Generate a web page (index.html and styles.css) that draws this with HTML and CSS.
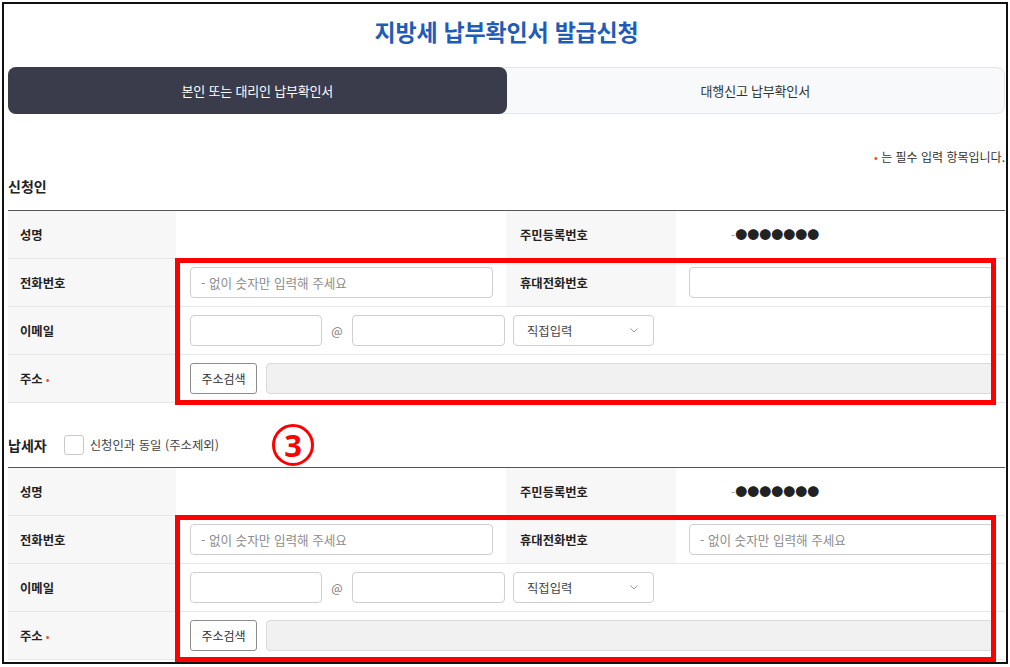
FILE: index.html
```html
<!DOCTYPE html>
<html lang="ko">
<head>
<meta charset="utf-8">
<title>지방세 납부확인서 발급신청</title>
<link rel="stylesheet" href="styles.css">
</head>
<body>
<div class="frame">
  <div class="page">
    <h1 class="title">지방세 납부확인서 발급신청</h1>
    <div class="tabs">
      <div class="tab active">본인 또는 대리인 납부확인서</div>
      <div class="tab">대행신고 납부확인서</div>
    </div>
    <p class="req-note"><span class="dot">•</span> 는 필수 입력 항목입니다.</p>

    <h2 class="sec-title">신청인</h2>
    <div class="table">
      <div class="row">
        <div class="th">성명</div>
        <div class="td"></div>
        <div class="th th2">주민등록번호</div>
        <div class="td rrn"><span class="dash">-</span>●●●●●●●</div>
      </div>
      <div class="row">
        <div class="th">전화번호</div>
        <div class="td"><input class="inp phone" placeholder="- 없이 숫자만 입력해 주세요"></div>
        <div class="th th2">휴대전화번호</div>
        <div class="td td-last"><input class="inp full"></div>
      </div>
      <div class="row">
        <div class="th">이메일</div>
        <div class="td span3 email">
          <input class="inp mail1">
          <span class="at">@</span>
          <input class="inp mail2">
          <div class="select"><span>직접입력</span><svg class="chev" width="8" height="5" viewBox="0 0 8 5"><path d="M0.5 0.5 L4 4 L7.5 0.5" fill="none" stroke="#9a9a9a" stroke-width="1"/></svg></div>
        </div>
      </div>
      <div class="row">
        <div class="th">주소 <span class="dot">•</span></div>
        <div class="td span3 addr-cell">
          <button class="btn" type="button">주소검색</button>
          <input class="inp addr" disabled>
        </div>
      </div>
      <div class="mark"></div>
    </div>

    <div class="sec-head">
      <h2 class="sec-title inline">납세자</h2>
      <span class="chk"></span>
      <span class="chk-label">신청인과 동일 (주소제외)</span>
      <span class="num-mark">3</span>
    </div>
    <div class="table table2">
      <div class="row">
        <div class="th">성명</div>
        <div class="td"></div>
        <div class="th th2">주민등록번호</div>
        <div class="td rrn"><span class="dash">-</span>●●●●●●●</div>
      </div>
      <div class="row">
        <div class="th">전화번호</div>
        <div class="td"><input class="inp phone" placeholder="- 없이 숫자만 입력해 주세요"></div>
        <div class="th th2">휴대전화번호</div>
        <div class="td td-last"><input class="inp full" placeholder="- 없이 숫자만 입력해 주세요"></div>
      </div>
      <div class="row">
        <div class="th">이메일</div>
        <div class="td span3 email">
          <input class="inp mail1">
          <span class="at">@</span>
          <input class="inp mail2">
          <div class="select"><span>직접입력</span><svg class="chev" width="8" height="5" viewBox="0 0 8 5"><path d="M0.5 0.5 L4 4 L7.5 0.5" fill="none" stroke="#9a9a9a" stroke-width="1"/></svg></div>
        </div>
      </div>
      <div class="row">
        <div class="th">주소 <span class="dot">•</span></div>
        <div class="td span3 addr-cell">
          <button class="btn" type="button">주소검색</button>
          <input class="inp addr" disabled>
        </div>
      </div>
      <div class="mark"></div>
    </div>
  </div>
</div>
</body>
</html>
```
FILE: styles.css
```css
html, body {
  margin: 0;
  padding: 0;
  background: #fff;
}
body {
  font-family: "Noto Sans CJK KR", "Noto Sans", sans-serif;
  color: #222;
}
.frame {
  margin: 2px 0 0 2px;
  width: 1006px;
  height: 662px;
  border: 2px solid #111;
  box-sizing: border-box;
  overflow: hidden;
  background: #fff;
}
.page {
  padding: 12px 1px 0 4px;
}
.title {
  margin: 0;
  height: 30px;
  line-height: 30px;
  font-size: 23px;
  font-weight: 700;
  color: #1f5cb8;
  text-align: center;
  letter-spacing: -0.2px;
}
.tabs {
  margin-top: 21px;
  display: grid;
  grid-template-columns: 1fr 1fr;
  height: 47px;
  border: 1px solid #e3e5e9;
  border-radius: 8px;
  background: #f8f9fa;
  box-sizing: border-box;
}
.tab {
  display: flex;
  align-items: center;
  justify-content: center;
  font-size: 13px;
  color: #333;
  letter-spacing: -0.2px;
}
.tab.active {
  background: #3b3c4b;
  color: #fff;
  border-radius: 8px;
  margin: -1px 0 -1px -1px;
}
.req-note {
  margin: 34px 0 0;
  text-align: right;
  font-size: 12px;
  line-height: 18px;
  color: #333;
  white-space: nowrap;
}
.dot {
  color: #e0562b;
  font-size: 11px;
}
.sec-title {
  margin: 10px 0 0;
  font-size: 14px;
  font-weight: 700;
  line-height: 20px;
  color: #222;
}
.sec-title.inline {
  margin: 0;
}
.table {
  margin-top: 14px;
  border-top: 1px solid #555;
  position: relative;
}
.table2 {
  margin-top: 12px;
}
.row {
  display: grid;
  grid-template-columns: 168px 330px 170px 1fr;
  height: 48px;
  border-bottom: 1px solid #e7e7e7;
  box-sizing: border-box;
}
.th {
  background: #f7f7f7;
  display: flex;
  align-items: center;
  padding-left: 12px;
  font-size: 12.3px;
  font-weight: 700;
  color: #222;
}
.th .dot {
  margin-left: 3px;
  font-weight: 400;
}
.th2 {
  padding-left: 14px;
}
.td {
  display: flex;
  align-items: center;
  padding-left: 14px;
  font-size: 12px;
}
.td-last {
  padding-left: 13px;
  padding-right: 12px;
}
.span3 {
  grid-column: 2 / 5;
}
.rrn {
  padding-left: 55px;
  color: #222;
}
.rrn .dash {
  color: #999;
}
.inp {
  height: 31px;
  border: 1px solid #cfcfcf;
  border-radius: 4px;
  box-sizing: border-box;
  padding: 0 10px;
  font-family: "Noto Sans CJK KR", "Noto Sans", sans-serif;
  font-size: 12.6px;
  color: #333;
  background: #fff;
  outline: none;
}
.inp::placeholder {
  color: #8c8c8c;
}
.phone {
  width: 303px;
}
.full {
  width: 100%;
}
.mail1 {
  width: 132px;
}
.at {
  width: 30px;
  text-align: center;
  color: #777;
  font-size: 12px;
}
.mail2 {
  width: 153px;
}
.select {
  margin-left: 8px;
  width: 141px;
  height: 31px;
  border: 1px solid #cfcfcf;
  border-radius: 4px;
  box-sizing: border-box;
  display: flex;
  align-items: center;
  justify-content: space-between;
  padding: 0 15px 0 13px;
  font-size: 12.3px;
  color: #444;
}
.chev {
  display: block;
}
.addr-cell {
  padding-right: 12px;
}
.btn {
  width: 67px;
  height: 31px;
  border: 1px solid #8d8d8d;
  border-radius: 3px;
  background: #fff;
  padding: 0;
  font-family: "Noto Sans CJK KR", "Noto Sans", sans-serif;
  font-size: 12px;
  color: #333;
  flex: none;
}
.addr {
  flex: 1;
  margin-left: 9px;
  background: #f1f1f1;
  border-color: #dadada;
}
.mark {
  position: absolute;
  left: 167px;
  top: 47px;
  width: 821px;
  height: 147px;
  border: 5px solid #f00;
  box-sizing: border-box;
  pointer-events: none;
}
.sec-head {
  margin-top: 32px;
  height: 20px;
  display: flex;
  align-items: center;
  position: relative;
}
.chk {
  width: 20px;
  height: 20px;
  margin-left: 17px;
  border: 1px solid #c9c9c9;
  border-radius: 3px;
  box-sizing: border-box;
  background: #fff;
}
.chk-label {
  margin-left: 6px;
  font-size: 12.4px;
  color: #444;
}
.num-mark {
  position: absolute;
  left: 264px;
  top: 50%;
  transform: translateY(-50%);
  width: 42px;
  height: 42px;
  border: 3px solid #f00;
  border-radius: 50%;
  box-sizing: border-box;
  display: flex;
  align-items: center;
  justify-content: center;
  color: #f00;
  font-family: "Noto Sans", "Liberation Sans", sans-serif;
  font-weight: 700;
  font-size: 31px;
  line-height: 1;
}
```
